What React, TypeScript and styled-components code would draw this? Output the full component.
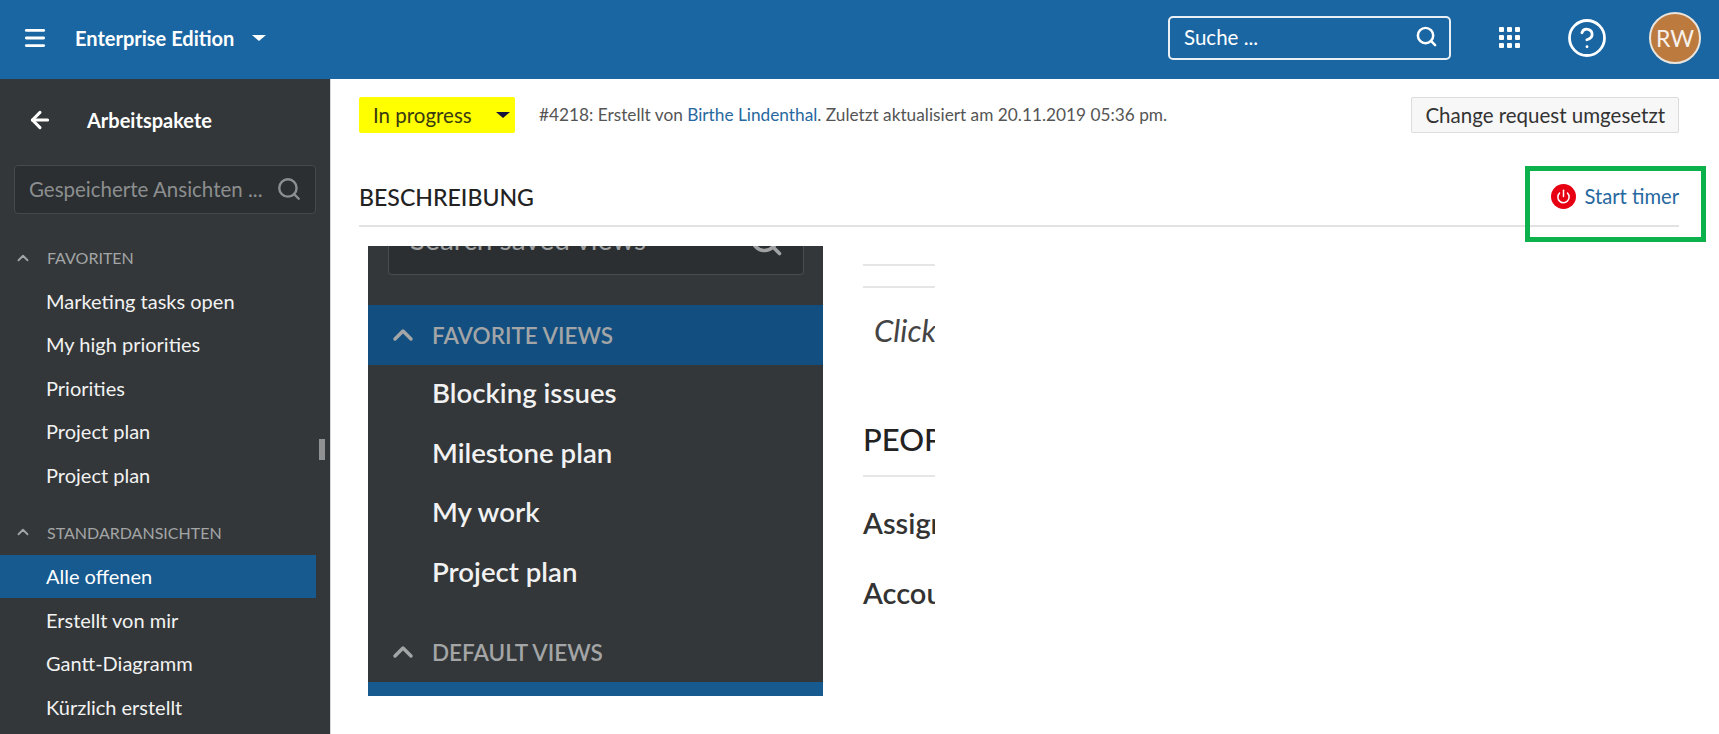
import styled, { createGlobalStyle } from "styled-components";
import { Menu, ArrowLeft, Search, ChevronUp, CircleHelp, Power } from "lucide-react";

const GlobalStyle = createGlobalStyle`
  html, body {
    margin: 0;
    height: 100%;
    overflow: hidden;
    background: #fff;
    font-family: "Lato", "Liberation Sans", sans-serif;
  }
  * { box-sizing: border-box; }
`;

const Page = styled.div`
  width: 1719px;
  height: 734px;
  display: flex;
  flex-direction: column;
  overflow: hidden;
`;

const TopBar = styled.header`
  height: 79px;
  flex: none;
  display: flex;
  align-items: center;
  background: #1a66a2;
  color: #fff;
  padding: 0 18px 4px 22px;
`;

const BrandTitle = styled.span`
  font-size: 20px;
  font-weight: 700;
  margin-left: 27px;
`;

const Caret = styled.span<{ $color?: string; $size?: number }>`
  width: 0;
  height: 0;
  border-left: ${(p) => p.$size ?? 7}px solid transparent;
  border-right: ${(p) => p.$size ?? 7}px solid transparent;
  border-top: ${(p) => (p.$size ?? 7) - 1}px solid ${(p) => p.$color ?? "#fff"};
`;

const BrandCaret = styled.span`
  display: flex;
  margin-left: 18px;
`;

const TopRight = styled.div`
  margin-left: auto;
  display: flex;
  align-items: center;
`;

const TopSearch = styled.div`
  width: 283px;
  height: 44px;
  border: 2px solid #e8f0f6;
  border-radius: 5px;
  display: flex;
  align-items: center;
  justify-content: space-between;
  padding: 0 11px 2px 14px;
  font-size: 20.5px;
  margin-right: 48px;
`;

const AppGrid = styled.div`
  display: grid;
  grid-template-columns: repeat(3, 5px);
  grid-auto-rows: 5px;
  gap: 3px;
  margin-right: 46px;

  span {
    background: #fff;
    border-radius: 1px;
  }
`;

const Avatar = styled.div`
  width: 52px;
  height: 52px;
  border-radius: 50%;
  margin-left: 41px;
  background: #bd7a3f;
  border: 2px solid #e9e4dc;
  display: flex;
  align-items: center;
  justify-content: center;
  font-size: 23px;
  color: #f6f1ea;
`;

const Body = styled.div`
  flex: 1;
  display: flex;
  min-height: 0;
`;

const Sidebar = styled.aside`
  position: relative;
  width: 331px;
  flex: none;
  background: #333739;
  color: #f4f4f4;
  border-right: 1px solid #d8d8d8;
  padding-top: 23px;
  overflow: hidden;
`;

const SideHead = styled.div`
  display: flex;
  align-items: center;
  height: 36px;
  padding-left: 27px;
  font-size: 20px;
  font-weight: 700;
  color: #fff;

  span {
    margin-left: 34px;
  }
`;

const SideSearch = styled.div`
  width: 302px;
  height: 49px;
  margin: 27px 0 0 14px;
  background: #2b2f31;
  border: 1px solid #46494b;
  border-radius: 4px;
  display: flex;
  align-items: center;
  justify-content: space-between;
  padding: 0 13px 2px 14px;
  font-size: 20.5px;
  white-space: nowrap;
  color: #8c8e8f;
`;

const GroupLabel = styled.div<{ $first?: boolean }>`
  display: flex;
  align-items: center;
  height: 43px;
  margin-top: ${(p) => (p.$first ? 22 : 14)}px;
  margin-bottom: ${(p) => (p.$first ? 0 : 1)}px;
  padding-left: 14px;
  font-size: 16px;
  color: #a3a5a6;

  span {
    margin-left: 15px;
  }
`;

const SideItem = styled.div<{ $active?: boolean }>`
  width: 316px;
  height: 43.5px;
  display: flex;
  align-items: center;
  padding-left: 46px;
  font-size: 20px;
  background: ${(p) => (p.$active ? "#165a90" : "transparent")};
  color: ${(p) => (p.$active ? "#fff" : "#f2f2f2")};
`;

const ResizeHandle = styled.div`
  position: absolute;
  left: 319px;
  top: 360px;
  width: 6px;
  height: 21px;
  background: #8f9192;
`;

const Main = styled.main`
  flex: 1;
  padding: 17px 40px 0 28px;
  min-width: 0;
`;

const StatusRow = styled.div`
  display: flex;
  align-items: center;
  height: 37px;
  color: #555;
`;

const StatusPill = styled.div`
  width: 156px;
  height: 36px;
  background: #ffff00;
  border-radius: 2px;
  display: flex;
  align-items: center;
  justify-content: space-between;
  padding: 0 5px 0 14px;
  font-size: 20.5px;
  color: #3a3a10;
  margin-right: 24px;
`;

const MetaText = styled.div`
  font-size: 17.25px;
  color: #555;
  flex: 1;
  white-space: nowrap;
`;

const Link = styled.a`
  color: #27689f;
`;

const ChangeButton = styled.button`
  height: 36px;
  padding: 0 13px;
  background: #f7f7f7;
  border: 1px solid #dcdcdc;
  border-radius: 2px;
  font-family: inherit;
  font-size: 20.5px;
  color: #333;
  white-space: nowrap;
`;

const SectionHead = styled.div`
  display: flex;
  align-items: center;
  justify-content: space-between;
  height: 60px;
  margin-top: 34px;
  border-bottom: 2px solid #e2e2e2;
  position: relative;
`;

const SectionTitle = styled.h2`
  margin: 2px 0 0;
  font-size: 23.1px;
  font-weight: 500;
  color: #222;
  text-transform: uppercase;
`;

const TimerLink = styled.a`
  display: flex;
  align-items: center;
  gap: 8px;
  font-size: 20.2px;
  color: #27689f;
`;

const PowerDot = styled.span`
  width: 25px;
  height: 25px;
  border-radius: 50%;
  background: #e60012;
  display: flex;
  align-items: center;
  justify-content: center;
  color: #fff;
`;

const GreenFrame = styled.div`
  position: absolute;
  top: -1px;
  right: -27px;
  width: 181px;
  height: 76px;
  border: 5px solid #0cb14b;
  pointer-events: none;
`;

const Figure = styled.div`
  display: flex;
  margin: 19px 0 0 9px;
  width: 567px;
  height: 450px;
`;

const InsetPanel = styled.div`
  width: 455px;
  height: 450px;
  background: #333739;
  overflow: hidden;
  color: #eee;
  flex: none;
`;

const InsetSearch = styled.div`
  width: 416px;
  height: 29px;
  margin: 0 0 0 20px;
  border: 1px solid #4a4d4f;
  border-top: 0;
  border-radius: 0 0 4px 4px;
  background: #2b2f31;
  overflow: hidden;
  position: relative;
  color: #a0a2a3;

  svg {
    position: absolute;
    right: 19px;
    top: -24px;
  }
`;

const InsetSearchText = styled.div`
  position: absolute;
  left: 21px;
  top: -19px;
  font-size: 28px;
  line-height: 24px;
  white-space: nowrap;
`;

const InsetGroup = styled.div<{ $active?: boolean; $top: number }>`
  display: flex;
  align-items: center;
  height: 60px;
  margin-top: ${(p) => p.$top}px;
  padding-left: 19px;
  background: ${(p) => (p.$active ? "#124f80" : "transparent")};
  color: #a3a5a6;
  font-size: 22.5px;
  font-weight: 600;

  span {
    margin-left: 13px;
  }
`;

const InsetList = styled.div`
  margin-top: -2px;
`;

const InsetItem = styled.div`
  height: 59.5px;
  display: flex;
  align-items: center;
  padding-left: 64px;
  font-size: 27.6px;
  font-weight: 600;
  color: #f2f2f2;
`;

const InsetBar = styled.div`
  height: 15px;
  background: #165a90;
`;

const Cropped = styled.div`
  width: 112px;
  padding-left: 40px;
  flex: none;
  overflow: hidden;
  white-space: nowrap;
  color: #333;
`;

const CropRule = styled.div<{ $top: number }>`
  width: 100%;
  height: 2px;
  margin-top: ${(p) => p.$top}px;
  background: #e6e6e6;
`;

const CropNote = styled.div`
  margin: 23px 0 0 11px;
  font-size: 31px;
  font-style: italic;
  color: #444;
`;

const CropHeading = styled.div`
  margin-top: 71px;
  font-size: 31px;
  font-weight: 500;
  color: #222;
`;

const CropLabel = styled.div<{ $top: number }>`
  margin-top: ${(p) => p.$top}px;
  font-size: 29px;
  font-weight: 600;
`;

const favorites = ["Marketing tasks open", "My high priorities", "Priorities", "Project plan", "Project plan"];
const defaults = ["Alle offenen", "Erstellt von mir", "Gantt-Diagramm", "Kürzlich erstellt"];
const insetViews = ["Blocking issues", "Milestone plan", "My work", "Project plan"];

export default function App() {
  return (
    <Page>
      <GlobalStyle />
      <TopBar>
        <Menu size={26} strokeWidth={2.6} />
        <BrandTitle>Enterprise Edition</BrandTitle>
        <BrandCaret>
          <Caret />
        </BrandCaret>
        <TopRight>
          <TopSearch>
            Suche ...
            <Search size={23} strokeWidth={2.6} />
          </TopSearch>
          <AppGrid>
            {Array.from({ length: 9 }).map((_, i) => (
              <span key={i} />
            ))}
          </AppGrid>
          <CircleHelp size={42} strokeWidth={1.6} />
          <Avatar>RW</Avatar>
        </TopRight>
      </TopBar>
      <Body>
        <Sidebar>
          <SideHead>
            <ArrowLeft size={26} strokeWidth={2.8} />
            <span>Arbeitspakete</span>
          </SideHead>
          <SideSearch>
            Gespeicherte Ansichten ...
            <Search size={26} strokeWidth={2.2} />
          </SideSearch>
          <GroupLabel $first>
            <ChevronUp size={18} strokeWidth={2.4} />
            <span>FAVORITEN</span>
          </GroupLabel>
          {favorites.map((name, i) => (
            <SideItem key={i}>{name}</SideItem>
          ))}
          <GroupLabel>
            <ChevronUp size={18} strokeWidth={2.4} />
            <span>STANDARDANSICHTEN</span>
          </GroupLabel>
          {defaults.map((name, i) => (
            <SideItem key={name} $active={i === 0}>
              {name}
            </SideItem>
          ))}
          <ResizeHandle />
        </Sidebar>
        <Main>
          <StatusRow>
            <StatusPill>
              In progress
              <Caret $color="#14143c" $size={7} />
            </StatusPill>
            <MetaText>
              #4218: Erstellt von <Link>Birthe Lindenthal</Link>. Zuletzt aktualisiert am 20.11.2019 05:36 pm.
            </MetaText>
            <ChangeButton>Change request umgesetzt</ChangeButton>
          </StatusRow>
          <SectionHead>
            <SectionTitle>Beschreibung</SectionTitle>
            <TimerLink>
              <PowerDot>
                <Power size={15} strokeWidth={2.4} />
              </PowerDot>
              Start timer
            </TimerLink>
            <GreenFrame />
          </SectionHead>
          <Figure>
            <InsetPanel>
              <InsetSearch>
                <InsetSearchText>Search saved views</InsetSearchText>
                <Search size={36} strokeWidth={2.4} />
              </InsetSearch>
              <InsetGroup $active $top={30}>
                <ChevronUp size={32} strokeWidth={2.6} />
                <span>FAVORITE VIEWS</span>
              </InsetGroup>
              <InsetList>
                {insetViews.map((name) => (
                  <InsetItem key={name}>{name}</InsetItem>
                ))}
              </InsetList>
              <InsetGroup $top={21}>
                <ChevronUp size={32} strokeWidth={2.6} />
                <span>DEFAULT VIEWS</span>
              </InsetGroup>
              <InsetBar />
            </InsetPanel>
            <Cropped>
              <CropRule $top={18} />
              <CropRule $top={20} />
              <CropNote>Click</CropNote>
              <CropHeading>PEOPLE</CropHeading>
              <CropRule $top={17} />
              <CropLabel $top={28}>Assignee</CropLabel>
              <CropLabel $top={35}>Accountable</CropLabel>
            </Cropped>
          </Figure>
        </Main>
      </Body>
    </Page>
  );
}
